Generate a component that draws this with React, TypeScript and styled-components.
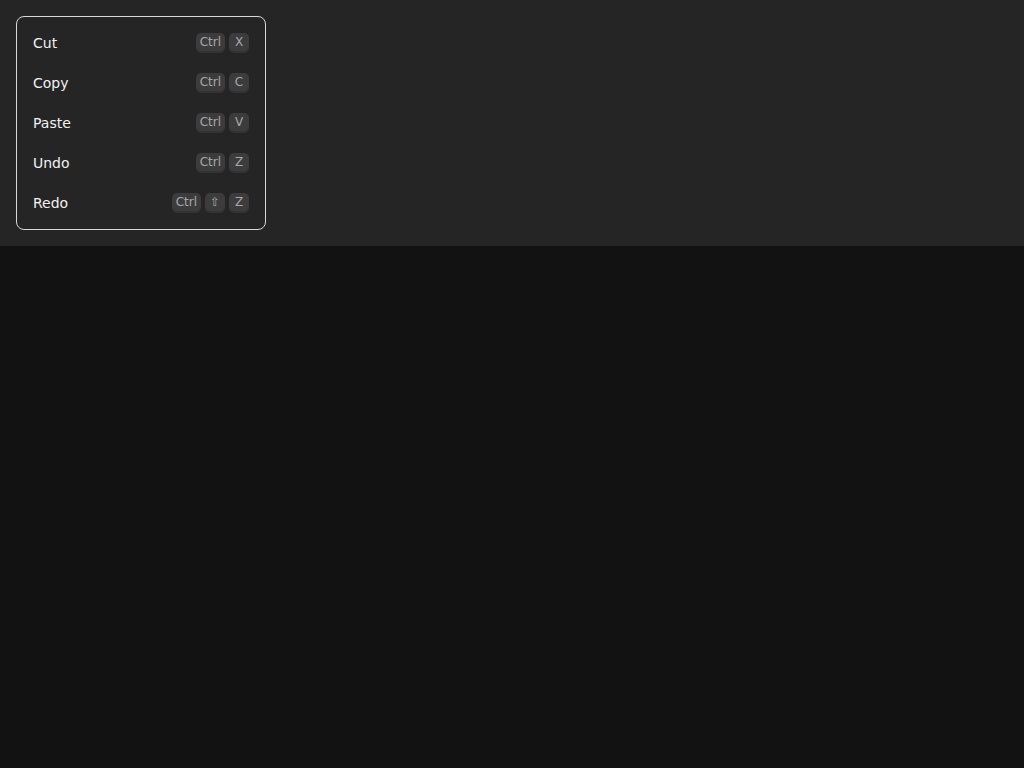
import React from "react";
import styled, { createGlobalStyle } from "styled-components";

const Global = createGlobalStyle`
  html, body { margin: 0; padding: 0; background: #121212; }
  body { font-family: "DejaVu Sans", sans-serif; }
`;

const Top = styled.div`
  background: #252525;
  padding: 16px;
`;

const Menu = styled.div`
  width: 250px;
  border: 1px solid #d8d8d8;
  border-radius: 8px;
  padding: 6px 16px;
  box-sizing: border-box;
`;

const Row = styled.div`
  height: 40px;
  display: flex;
  align-items: center;
  justify-content: space-between;
`;

const Label = styled.span`
  color: #f2f2f2;
  font-size: 14px;
`;

const Keys = styled.div`
  display: flex;
  gap: 4px;
`;

const Key = styled.kbd`
  font-family: "DejaVu Sans", sans-serif;
  font-size: 12px;
  color: #a8a8a8;
  background: #3c3c3c;
  border-radius: 5px;
  min-width: 20px;
  height: 18px;
  line-height: 18px;
  padding: 0 4px;
  box-sizing: border-box;
  text-align: center;
  box-shadow: 0 2px 0 #333333;
  margin-top: -3px;
`;

const items: { label: string; keys: string[] }[] = [
  { label: "Cut", keys: ["Ctrl", "X"] },
  { label: "Copy", keys: ["Ctrl", "C"] },
  { label: "Paste", keys: ["Ctrl", "V"] },
  { label: "Undo", keys: ["Ctrl", "Z"] },
  { label: "Redo", keys: ["Ctrl", "⇧", "Z"] },
];

export default function App() {
  return (
    <>
      <Global />
      <Top>
        <Menu>
          {items.map((it) => (
            <Row key={it.label}>
              <Label>{it.label}</Label>
              <Keys>
                {it.keys.map((k, i) => (
                  <Key key={i}>{k}</Key>
                ))}
              </Keys>
            </Row>
          ))}
        </Menu>
      </Top>
    </>
  );
}
